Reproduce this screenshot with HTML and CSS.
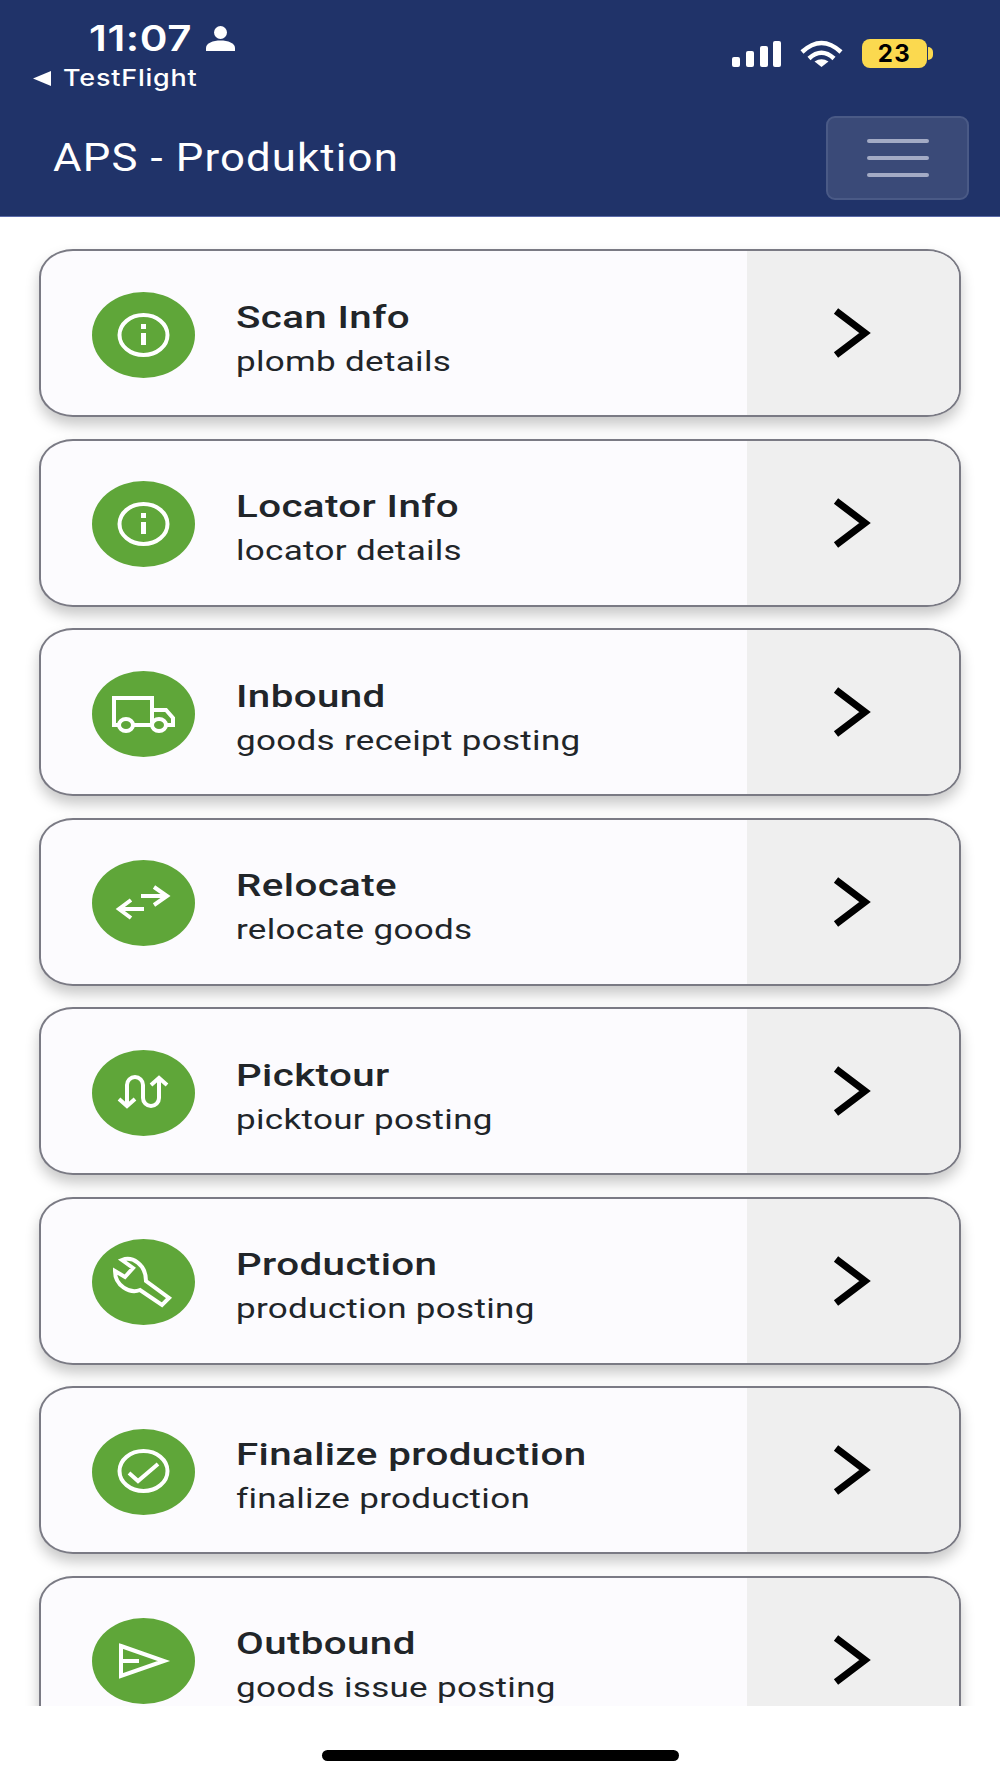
FILE: index.html
```html
<!DOCTYPE html>
<html lang="en">
<head>
  <meta charset="utf-8" />
  <title>APS - Produktion</title>
  <link rel="stylesheet" href="styles.css">
</head>
<body>
  <header class="app-header">
    <div class="status-bar">
      <div class="status-left">
        <div class="time-row">
          <span class="time">11:07</span>
          <svg class="person" viewBox="0 0 29 25"><circle cx="14.500" cy="6.500" r="6.500"/><path d="M0 25v-3c0-5 7-7.500 14.500-7.500S29 17 29 22v3z"/></svg>
        </div>
        <div class="back-row">
          <svg class="back-arrow" viewBox="0 0 18 15"><path d="M0 7.500 18 0v15z"/></svg>
          <span class="back-label">TestFlight</span>
        </div>
      </div>
      <div class="status-right">
        <svg class="signal" viewBox="0 0 49 26"><rect x="0" y="16" width="8" height="10" rx="2"/><rect x="14" y="10" width="8" height="16" rx="2"/><rect x="28" y="5" width="8" height="21" rx="2"/><rect x="41" y="0" width="8" height="26" rx="2"/></svg>
        <svg class="wifi" viewBox="0 0 43 27"><path d="M2 12Q21.500-6 41 12M9 18.500Q21.500 7 34 18.500" fill="none" stroke="#fff" stroke-width="4.500"/><path d="M14.500 21.500Q21.500 17 28.500 21.500L21.500 27z"/></svg>
        <div class="battery"><span class="battery-level">23</span><span class="battery-nub"></span></div>
      </div>
    </div>
    <nav class="navbar">
      <span class="brand">APS - Produktion</span>
      <button type="button" class="menu-button"><span></span><span></span><span></span></button>
    </nav>
  </header>

  <main class="menu-list">
    <a class="menu-card">
      <div class="card-main">
        <div class="card-icon">
          <svg viewBox="0 0 103 84"><ellipse cx="51.500" cy="42" rx="24" ry="20"/><path d="M51.500 40v12" stroke-width="5"/><path d="M51.500 31v5" stroke-width="5"/></svg>
        </div>
        <div class="card-text"><div class="card-title">Scan Info</div><div class="card-sub">plomb details</div></div>
      </div>
      <div class="card-go"><svg viewBox="0 0 40 50"><path d="M3 3 32 25 3 47"/></svg></div>
    </a>
    <a class="menu-card">
      <div class="card-main">
        <div class="card-icon">
          <svg viewBox="0 0 103 84"><ellipse cx="51.500" cy="42" rx="24" ry="20"/><path d="M51.500 40v12" stroke-width="5"/><path d="M51.500 31v5" stroke-width="5"/></svg>
        </div>
        <div class="card-text"><div class="card-title">Locator Info</div><div class="card-sub">locator details</div></div>
      </div>
      <div class="card-go"><svg viewBox="0 0 40 50"><path d="M3 3 32 25 3 47"/></svg></div>
    </a>
    <a class="menu-card">
      <div class="card-main">
        <div class="card-icon">
          <svg viewBox="0 0 103 84"><path d="M26 53h-4V26h38v27H42M60 53h-1M60 38h14l7 8v7h-6"/><ellipse cx="34" cy="53" rx="7" ry="6"/><ellipse cx="67" cy="53" rx="7" ry="6"/></svg>
        </div>
        <div class="card-text"><div class="card-title">Inbound</div><div class="card-sub">goods receipt posting</div></div>
      </div>
      <div class="card-go"><svg viewBox="0 0 40 50"><path d="M3 3 32 25 3 47"/></svg></div>
    </a>
    <a class="menu-card">
      <div class="card-main">
        <div class="card-icon">
          <svg viewBox="0 0 103 84"><path d="M49 35h26M62 26l13 9-13 9M52 48H27M39 39l-12 9 12 9"/></svg>
        </div>
        <div class="card-text"><div class="card-title">Relocate</div><div class="card-sub">relocate goods</div></div>
      </div>
      <div class="card-go"><svg viewBox="0 0 40 50"><path d="M3 3 32 25 3 47"/></svg></div>
    </a>
    <a class="menu-card">
      <div class="card-main">
        <div class="card-icon">
          <svg viewBox="0 0 103 84"><path d="M35 55V34a8 8 0 0 1 16 0v13a8 8 0 0 0 16 0V27M27 48l8 7 8-7M59 34l8-7 8 7"/></svg>
        </div>
        <div class="card-text"><div class="card-title">Picktour</div><div class="card-sub">picktour posting</div></div>
      </div>
      <div class="card-go"><svg viewBox="0 0 40 50"><path d="M3 3 32 25 3 47"/></svg></div>
    </a>
    <a class="menu-card">
      <div class="card-main">
        <div class="card-icon">
          <svg viewBox="0 0 103 84"><path d="M48 50C38 54 23 46 23 31L33 37 41 28 30 20C40 16 54 24 54 41L77 58 70 65z"/></svg>
        </div>
        <div class="card-text"><div class="card-title">Production</div><div class="card-sub">production posting</div></div>
      </div>
      <div class="card-go"><svg viewBox="0 0 40 50"><path d="M3 3 32 25 3 47"/></svg></div>
    </a>
    <a class="menu-card">
      <div class="card-main">
        <div class="card-icon">
          <svg viewBox="0 0 103 84"><ellipse cx="51.500" cy="41" rx="24" ry="20"/><path d="M37 43l9 8 20-17"/></svg>
        </div>
        <div class="card-text"><div class="card-title">Finalize production</div><div class="card-sub">finalize production</div></div>
      </div>
      <div class="card-go"><svg viewBox="0 0 40 50"><path d="M3 3 32 25 3 47"/></svg></div>
    </a>
    <a class="menu-card">
      <div class="card-main">
        <div class="card-icon">
          <svg viewBox="0 0 103 84"><path d="M29 27 72 42 29 57zM29 42h18"/></svg>
        </div>
        <div class="card-text"><div class="card-title">Outbound</div><div class="card-sub">goods issue posting</div></div>
      </div>
      <div class="card-go"><svg viewBox="0 0 40 50"><path d="M3 3 32 25 3 47"/></svg></div>
    </a>
  </main>

  <footer class="home-area"><div class="home-bar"></div></footer>
</body>
</html>
```

FILE: styles.css
```css
html, body {
  margin: 0;
  padding: 0;
}
body {
  width: 1000px;
  height: 1778px;
  overflow: hidden;
  background-color: #fff;
  font-family: Roboto, sans-serif;
  color: #212529;
}

/* header + status bar */
.app-header {
  height: 217px;
  box-sizing: border-box;
  background-color: #203369;
  border-bottom: 1px solid #5a6aa8;
  color: #fff;
}
.status-bar {
  height: 116px;
  box-sizing: border-box;
  padding: 19px 67px 0 33px;
  display: flex;
  justify-content: space-between;
}
.time-row {
  display: flex;
  align-items: center;
  padding-left: 56px;
  height: 38px;
}
.time {
  font-family: Inter, sans-serif;
  font-size: 36px;
  font-weight: 600;
  letter-spacing: 0.5px;
  width: 117px;
  transform: scaleX(1.17);
  transform-origin: left center;
}
.person {
  width: 29px;
  height: 25px;
  fill: #fff;
}
.back-row {
  display: flex;
  align-items: center;
  margin-top: 9px;
  height: 24px;
}
.back-arrow {
  width: 18px;
  height: 15px;
  fill: #fff;
  margin-right: 12px;
}
.back-label {
  font-family: Inter, sans-serif;
  font-size: 23px;
  font-weight: 500;
  letter-spacing: 0.7px;
  transform: scaleX(1.17);
  transform-origin: left center;
}
.status-right {
  display: flex;
  align-items: flex-start;
  padding-top: 20px;
}
.signal {
  width: 49px;
  height: 26px;
  fill: #fff;
  margin: 2px 19px 0 0;
}
.wifi {
  width: 43px;
  height: 27px;
  fill: #fff;
  margin: 1px 19px 0 0;
}
.battery {
  display: flex;
  align-items: center;
}
.battery-level {
  width: 65px;
  height: 29px;
  border-radius: 8px;
  background-color: #fbd94f;
  color: #000;
  font-family: Inter, sans-serif;
  font-size: 24px;
  font-weight: 700;
  letter-spacing: 1.5px;
  line-height: 30px;
  text-align: center;
}
.battery-nub {
  width: 5px;
  height: 13px;
  margin-left: 1px;
  border-radius: 0 6px 6px 0;
  background-color: #fbd94f;
}
.navbar {
  display: flex;
  justify-content: space-between;
  align-items: center;
  height: 84px;
  padding: 0 31px 0 53px;
}
.brand {
  font-size: 38px;
  letter-spacing: 1px;
  transform: scaleX(1.15);
  transform-origin: left center;
}
.menu-button {
  width: 143px;
  height: 84px;
  padding: 0;
  box-sizing: border-box;
  display: flex;
  flex-direction: column;
  align-items: center;
  justify-content: center;
  gap: 13px;
  background-color: #3a4a78;
  border: 2px solid #4a5a86;
  border-radius: 9px;
}
.menu-button span {
  width: 62px;
  height: 4px;
  border-radius: 2px;
  background-color: #a3abc5;
}

/* list of cards */
.menu-list {
  height: 1489px;
  box-sizing: border-box;
  overflow: hidden;
  padding: 32px 39px 0;
  display: flex;
  flex-direction: column;
  gap: 21.57px;
}
.menu-card {
  flex: none;
  height: 168px;
  box-sizing: border-box;
  display: flex;
  overflow: hidden;
  background-color: #fcfbfe;
  border: 2px solid #7a7a84;
  border-radius: 34px / 28px;
  box-shadow: 0 8px 14px rgba(0, 0, 0, 0.22);
}
.card-main {
  flex: 1;
  display: flex;
  align-items: center;
  padding-left: 51px;
}
.card-icon {
  flex: none;
  width: 103px;
  height: 86px;
  margin-top: 3px;
  border-radius: 50%;
  background-color: #5fa639;
  margin-right: 41px;
}
.card-icon svg {
  display: block;
  width: 103px;
  height: 84px;
  margin-top: 1px;
  fill: none;
  stroke: #fff;
  stroke-width: 4;
}
.card-text {
  padding-top: 13px;
}
.card-title {
  font-size: 31px;
  font-weight: 500;
  letter-spacing: 0.3px;
  line-height: 44px;
  transform: scaleX(1.3);
  transform-origin: left center;
}
.card-sub {
  font-size: 28px;
  letter-spacing: 0.25px;
  line-height: 44px;
  transform: scaleX(1.25);
  transform-origin: left center;
}
.card-go {
  flex: none;
  width: 212px;
  display: flex;
  align-items: center;
  justify-content: center;
  background-color: #efefef;
}
.card-go svg {
  width: 40px;
  height: 50px;
  fill: none;
  stroke: #000;
  stroke-width: 7;
}

.home-area {
  height: 72px;
  display: flex;
  justify-content: center;
  padding-top: 44px;
  box-sizing: border-box;
}
.home-bar {
  width: 357px;
  height: 11px;
  border-radius: 6px;
  background-color: #000;
}
```
